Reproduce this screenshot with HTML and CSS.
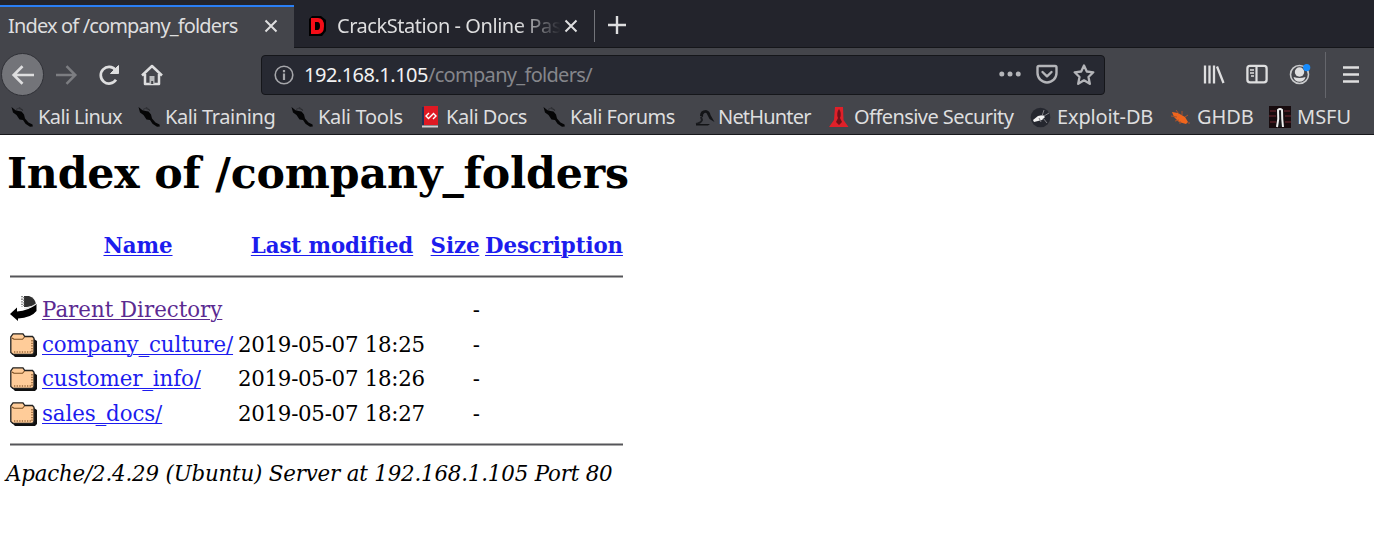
FILE: index.html
```html
<!DOCTYPE html>
<html lang="en">
<head>
<meta charset="utf-8">
<title>Index of /company_folders</title>
<link rel="stylesheet" href="styles.css">
</head>
<body>
<svg class="defs" width="0" height="0">
  <defs>
    <symbol id="kali" viewBox="0 0 22 22"><path d="M.5 1l4 3.200 3 .8 3 .5 2.500 3 1 4 3.500 4 4 2 .3 2-2.800.3-4.500-3-2.500-3.800-3.500-.5-3-4.500-3.500-2.500z" fill="#050506"/><path d="M5 3.500l4-2 3 3.500M8 2.500l4 1.500" fill="none" stroke="#26272b" stroke-width=".7"/></symbol>
    <symbol id="folder" viewBox="0 0 27 24"><path d="M3 6h21l3 2v14l-2 2H5l-3-3z" fill="#111"/><path d="M.8 3.800l2.200-3h10l1.800 2.700h7.700L24 5.300v14.200l-1.300 1.800H2.800L.8 19.500z" fill="#ffcc99" stroke="#222" stroke-width="1.300"/><path d="M2 5l2 1.300h8.500L14.500 4" fill="none" stroke="#7a4d20" stroke-width="1.100"/><path d="M4 19h18V7" fill="none" stroke="#9a6a3c" stroke-width="1.600" stroke-dasharray="1.300 1.300"/></symbol>
    <symbol id="close" viewBox="0 0 14 14"><path d="M1.500 1.500l11 11M12.500 1.500l-11 11" stroke="#dededf" stroke-width="2" fill="none"/></symbol>
  </defs>
</svg>
<header class="browser">
  <div class="tabs">
    <div class="tab tab-active"><span class="tab-title t1">Index of /company_folders</span><svg class="close" width="14" height="14"><use href="#close"/></svg></div>
    <div class="tab tab-idle">
      <svg class="favicon" width="18" height="20" viewBox="0 0 18 20"><path d="M0 3l3-3h9l5 4v11l-4 5H0z" fill="#000"/><path d="M2 2h7q6 0 6 8t-6 8H2zM6 6v8h2.500q2.500 0 2.500-4T8.500 6z" fill="#f40d17" fill-rule="evenodd"/></svg>
      <span class="tab-title t2">CrackStation - Online Pas</span><svg class="close" width="14" height="14"><use href="#close"/></svg>
    </div>
    <div class="new-tab"><svg width="20" height="20" viewBox="0 0 20 20"><path d="M10 1v18M1 10h18" stroke="#dededf" stroke-width="2.400"/></svg></div>
  </div>
  <nav class="toolbar">
    <div class="back"><svg width="24" height="22" viewBox="0 0 24 22"><path d="M23 11H2.500M11.500 2.200L2.700 11l8.800 8.800" fill="none" stroke="#dededf" stroke-width="2.700"/></svg></div>
    <svg class="forward" width="23" height="22" viewBox="0 0 23 22"><path d="M1 11h19.500M11.500 2.200L20.300 11l-8.800 8.800" fill="none" stroke="#7c7d81" stroke-width="2.500"/></svg>
    <svg class="reload" width="22" height="22" viewBox="0 0 22 22"><path d="M18 15.800A8.300 8.300 0 1 1 17.500 6" fill="none" stroke="#dededf" stroke-width="2.700"/><path d="M20.500 1.500v8h-8z" fill="#dededf" stroke="#dededf"/></svg>
    <svg class="home" width="22" height="22" viewBox="0 0 22 22"><path d="M1 11.500L11 2l10 9.500M4 10v10h14V10" fill="none" stroke="#dededf" stroke-width="2.500" stroke-linejoin="round"/><path d="M8.500 20v-8h5v8z" fill="#b9babc"/><path d="M10.200 20v-3h2v3z" fill="#444549"/></svg>
    <div class="urlbar">
      <svg width="20" height="20" viewBox="0 0 20 20"><circle cx="10" cy="10" r="8.800" fill="none" stroke="#a5a6aa" stroke-width="1.600"/><path d="M10 8.500V15M10 5v2.200" stroke="#a5a6aa" stroke-width="2.200"/></svg>
      <span class="url"><b>192.168.1.105</b><span>/company_folders/</span></span>
      <div class="url-actions">
        <svg width="22" height="22" viewBox="0 0 22 22" fill="#b4b5b9"><circle cx="2.800" cy="10" r="2.500"/><circle cx="11" cy="10" r="2.500"/><circle cx="19.200" cy="10" r="2.500"/></svg>
        <svg width="22" height="22" viewBox="0 0 22 22" fill="none" stroke="#b4b5b9" stroke-width="2.400" stroke-linejoin="round" stroke-linecap="round"><path d="M3 2h16q1.500 0 1.500 1.500V9a9.500 9.500 0 0 1-19 0V3.500Q1.500 2 3 2zM6.500 8l4.500 4.300L15.500 8"/></svg>
        <svg width="22" height="22" viewBox="0 0 22 22"><path d="M11 1.500l2.800 6 6.500.8-4.800 4.700 1.300 6.800L11 16.300l-5.800 3.500L6.500 13 1.700 8.300l6.500-.8z" fill="none" stroke="#b4b5b9" stroke-width="2.300" stroke-linejoin="round"/></svg>
      </div>
    </div>
    <div class="tools">
      <svg width="22" height="22" viewBox="0 0 22 22" stroke="#dededf" stroke-width="2.300"><path d="M2 1.500v18M6.500 1.500v18M11 1.500v18M14 2.500L20.500 19"/></svg>
      <svg width="22" height="22" viewBox="0 0 22 22"><rect x="1.400" y="1.900" width="19.200" height="16.500" rx="2.600" fill="none" stroke="#dededf" stroke-width="2.300"/><path d="M10.500 2.500v16" stroke="#dededf" stroke-width="2.200"/><path d="M4 6h4M4 9h4M5 12h3" stroke="#dededf" stroke-width="1.500"/></svg>
      <svg width="22" height="22" viewBox="0 0 22 22"><circle cx="10.500" cy="10.500" r="9" fill="none" stroke="#c9cacc" stroke-width="1.600"/><circle cx="10.500" cy="8" r="4.700" fill="#dededf"/><path d="M4.500 13q6 2 12 0-1 4.800-6 4.800t-6-4.800z" fill="#dededf"/><circle cx="17.700" cy="3.600" r="3.600" fill="#168cff"/></svg>
    </div>
    <div class="menu"><svg width="18" height="18" viewBox="0 0 18 18"><path d="M1 1.500h16M1 8.500h16M1 15.500h16" stroke="#dededf" stroke-width="2.500"/></svg></div>
  </nav>
  <div class="bookmarks">
    <a class="bm b0"><svg width="22" height="22"><use href="#kali"/></svg><span>Kali Linux</span></a>
    <a class="bm b1"><svg width="22" height="22"><use href="#kali"/></svg><span>Kali Training</span></a>
    <a class="bm b2"><svg width="22" height="22"><use href="#kali"/></svg><span>Kali Tools</span></a>
    <a class="bm b3"><svg width="18" height="22" viewBox="0 0 18 22"><path d="M1 1h3v18H1z" fill="#223157"/><path d="M3 0h14v19H3z" fill="#df1923"/><path d="M1 19.500h16v2H1z" fill="#d4d0d3"/><path d="M8 7l-3 3 3 3M12 7l3 3-3 3M8 12l4-4" stroke="#fff" stroke-width="1.400" fill="none"/></svg><span>Kali Docs</span></a>
    <a class="bm b4"><svg width="22" height="22"><use href="#kali"/></svg><span>Kali Forums</span></a>
    <a class="bm b5"><svg width="20" height="22" viewBox="0 0 20 22"><path d="M1 18q5-1 6-4l-1-3" fill="none" stroke="#1b1c20" stroke-width="2"/><path d="M5 10q0-6 6-6 4 1 4.500 5l4 7-5-3-2-4q-1-3-3-2-2 1-1.500 4zM1 18h14l-2 1.500H1z" fill="#131417"/></svg><span>NetHunter</span></a>
    <a class="bm b6"><svg width="20" height="22" viewBox="0 0 20 22"><path d="M6 1h8l.5 13 5 7H0l5-7z" fill="#e02029"/><path d="M10 3q-3 4-1 9l-2 4 3 3 3-3-2-4q2-5-1-9z" fill="#6e1119"/></svg><span>Offensive Security</span></a>
    <a class="bm b7"><svg width="22" height="22" viewBox="0 0 22 22"><circle cx="10.500" cy="11.500" r="9.800" fill="#25272f"/><path d="M3 14l5-4 5-1 2 2-3 3-8 2z" fill="#f2f2f2"/><path d="M12 10l2-6M14 10l5-3M13 12l4 5M9 12l2 4" stroke="#808086" fill="none"/></svg><span>Exploit-DB</span></a>
    <a class="bm b8"><svg width="22" height="22" viewBox="0 0 22 22"><path d="M2 6l6 1 7 4 3 5-2 2-7-2-5-5z" fill="#ef651d"/><path d="M1 10l6 1M6 4l3 4M12 5v4M18 9l-3 2M18 17h2M5 15l4-1M10 18v-3" stroke="#a9532c" stroke-width="1"/></svg><span>GHDB</span></a>
    <a class="bm b9"><svg width="22" height="22" viewBox="0 0 22 22"><path d="M0 0h22v22H0z" fill="#170b0e"/><path d="M1 5h6M15 5h6M0 10h7M16 10h6M1 16h6M16 16h6" stroke="#45191f" stroke-width="2"/><path d="M8 21q2-8 1-17 2-2 4 0 0 9 1 17" fill="#17181b" stroke="#eee" stroke-width="2"/></svg><span>MSFU</span></a>
  </div>
</header>
<main class="page">
  <h1><span>Index of /company_folders</span></h1>
  <section class="listing">
    <div class="row head"><i></i><a class="h-name">Name</a><a class="h-mod">Last modified</a><a class="h-size">Size</a><a class="h-desc">Description</a></div>
    <div class="rule"></div>
    <div class="rows">
      <div class="row"><svg width="27" height="27" viewBox="0 0 27 27"><path d="M14 0h5q6 2 7 8-4 3-9 3h-3z" fill="#303030"/><path d="M12 0v11M14 1v10" stroke="#555" stroke-width="1.300" stroke-dasharray="1.300 1.300"/><path d="M0 18l7-6.500v4q12-.5 18-7.500h1.500v7Q21 22 8 22.500V25z" fill="#000"/><path d="M14 12.500q7-.5 12-4.500" fill="none" stroke="#e5e5e5" stroke-width="1.200"/></svg><a class="visited">Parent Directory</a><span></span><span class="size">-</span></div>
      <div class="row"><svg width="27" height="24"><use href="#folder"/></svg><a>company_culture/</a><span class="date">2019-05-07 18:25</span><span class="size">-</span></div>
      <div class="row"><svg width="27" height="24"><use href="#folder"/></svg><a>customer_info/</a><span class="date">2019-05-07 18:26</span><span class="size">-</span></div>
      <div class="row"><svg width="27" height="24"><use href="#folder"/></svg><a>sales_docs/</a><span class="date">2019-05-07 18:27</span><span class="size">-</span></div>
    </div>
    <div class="rule"></div>
  </section>
  <address>Apache/2.4.29 (Ubuntu) Server at 192.168.1.105 Port 80</address>
</main>
</body>
</html>
```
FILE: styles.css
```css
* { box-sizing: border-box; }
body { margin: 0; background: #fff; overflow: hidden; }
svg { flex: none; display: block; }
.defs { position: absolute; }
.browser { height: 135px; background: #44454b; border-bottom: 1px solid #17181b; color: #dededf; font: 20px/28px "Noto Sans", sans-serif; white-space: nowrap; }
.tabs { display: flex; height: 48px; background: #23242c; padding-top: 5px; }
.tab { display: flex; align-items: center; height: 43px; }
.tab-active { width: 294px; border-top: 2px solid #2a7ff5; background: #44454b; padding: 0 16px 3px 8px; justify-content: space-between; }
.tab-idle { width: 300px; padding: 0 15px 0 15px; border-bottom: 1px solid #15161a; }
.t1 { letter-spacing: -.85px; }
.t2 { width: 226px; margin: 0 1px 0 10px; letter-spacing: -.45px; -webkit-mask-image: linear-gradient(90deg, #000 80%, transparent 99%); mask-image: linear-gradient(90deg, #000 80%, transparent 99%); }
.new-tab { flex: 1; display: flex; padding: 10px 0 0 13px; border-bottom: 1px solid #15161a; background: linear-gradient(#73747a, #73747a) 0 5px / 1px 32px no-repeat; }
.toolbar { display: flex; align-items: center; height: 53px; }
.back { display: grid; place-items: center; width: 43px; height: 43px; margin-left: 1px; border-radius: 50%; background: #737479; border: 1px solid #303137; }
.forward { margin-left: 11px; }
.reload { margin-left: 20px; }
.home { margin-left: 21px; }
.urlbar { display: flex; align-items: center; width: 844px; height: 40px; margin-left: 98px; padding: 0 9px 0 12px; border: 1px solid #15161a; border-radius: 4px; background: #272932; }
.url { margin-left: 10px; flex: 1; color: #85868b; letter-spacing: -.7px; }
.url b { color: #f2f2f3; font-weight: 400; letter-spacing: -.5px; }
.url-actions { display: flex; gap: 15px; }
.tools { display: flex; gap: 21px; margin-left: 98px; }
.menu { display: flex; align-items: center; height: 46px; margin-left: 14px; padding-left: 16px; border-left: 1px solid #65666c; }
.bookmarks { display: flex; align-items: center; height: 31px; padding-left: 11px; }
.bm { display: flex; align-items: center; gap: 5px; height: 31px; flex: none; }
.b0 { width: 127px; letter-spacing: -.6px; }
.b1 { width: 153px; letter-spacing: -.4px; }
.b2 { width: 129px; letter-spacing: -.3px; }
.b3 { width: 123px; gap: 7px; padding-left: 1px; letter-spacing: -.45px; }
.b4 { width: 152px; letter-spacing: -.52px; }
.b5 { width: 134px; gap: 3px; letter-spacing: -.82px; }
.b6 { width: 201px; letter-spacing: -.56px; }
.b7 { width: 140px; letter-spacing: -.15px; }
.b8 { width: 99px; letter-spacing: -.1px; }
.b9 { width: 85px; gap: 6px; }

.page { color: #000; font: 21.33px/30px "DejaVu Serif", serif; white-space: nowrap; }
h1 { margin: 0; padding: 13px 0 0 7px; font-size: 42.67px; line-height: 50px; letter-spacing: -.17px; }
.listing { width: 623px; padding: 33px 0 0 10px; }
.row { display: grid; grid-template-columns: 27px 191px 187px 50px 138px; column-gap: 5px; align-items: center; height: 34.7px; }
.row a { color: #1c1cee; letter-spacing: -.1px; text-decoration: underline; text-decoration-thickness: 1.3px; text-underline-offset: 2px; }
.row .visited { color: #5b2a91; letter-spacing: 0; }
.head { height: 30px; font-weight: 700; text-align: center; }
.head .h-name, .head .h-mod { padding-left: 1px; }
.rule { height: 3px; background: #55555a; border: solid #aaa; border-width: 1px 0; }
.head + .rule { margin-top: 14px; }
.rows { padding: 14.6px 0 11.4px; }
.date { letter-spacing: -.28px; }
.size { text-align: right; }
address { padding: 13px 0 0 6px; letter-spacing: -.17px; }
```
